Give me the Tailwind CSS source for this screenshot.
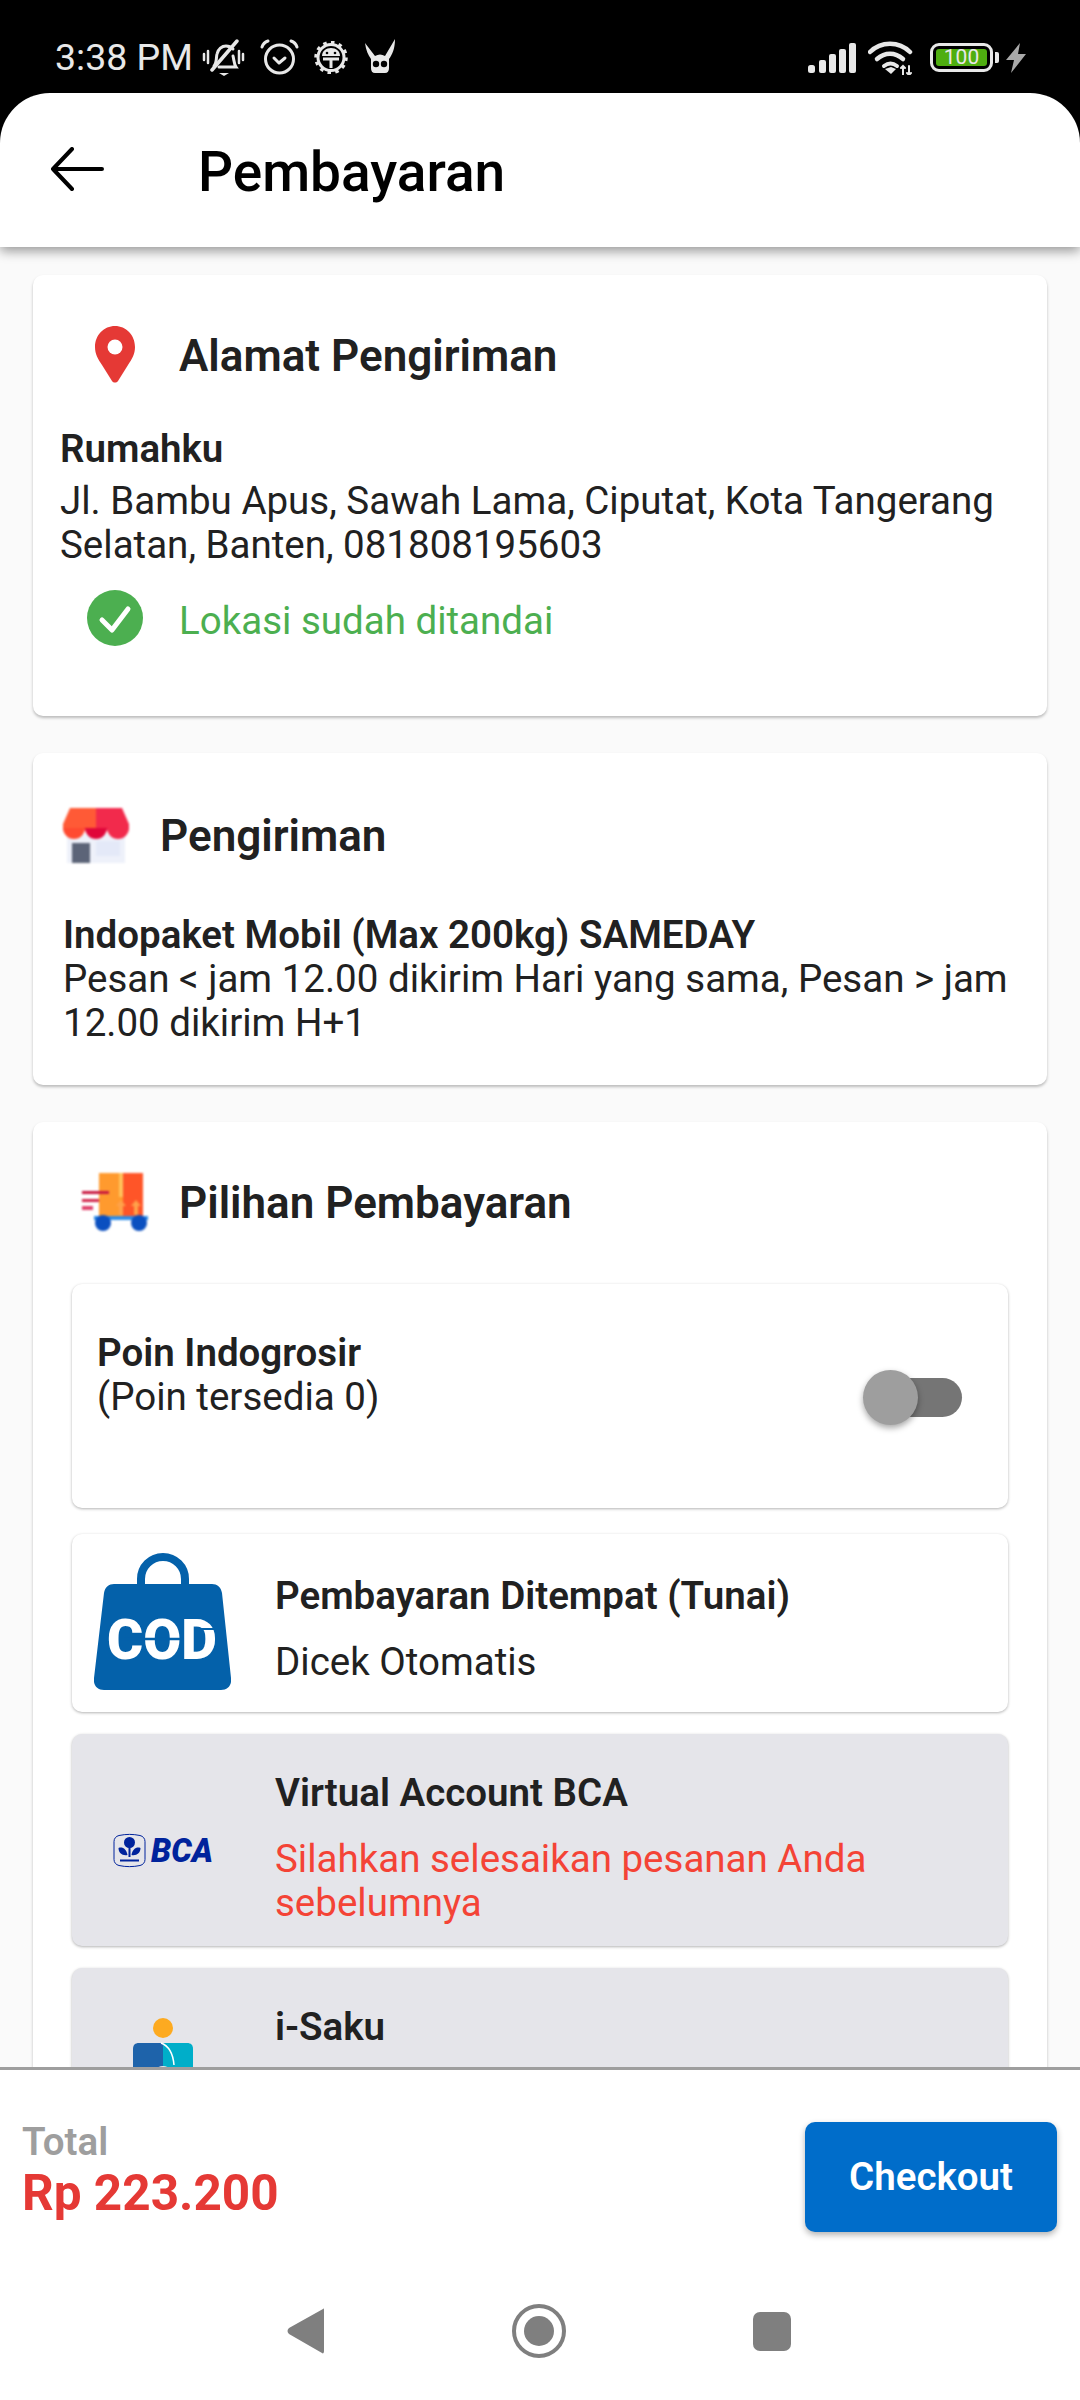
<!DOCTYPE html>
<html lang="en">
<head>
  <meta charset="UTF-8" />
  <meta name="viewport" content="width=device-width, initial-scale=1.0">
  <title>Pembayaran</title>
  <script src="https://cdn.jsdelivr.net/npm/@tailwindcss/browser@4"></script>
</head>
<body class="bg-black font-['Roboto',sans-serif] text-[#212121] text-[38.5px] leading-[44px]">
<div class="w-[1080px] h-[2400px] flex flex-col overflow-hidden bg-black">

  <!-- Status bar -->
  <div class="h-[93px] shrink-0 flex items-start pt-[38px] pl-[55px] text-[#e8e8e8]">
    <span class="text-[37.5px] leading-[38px] w-[147px] shrink-0">3:38 PM</span>
    <svg class="w-[43px] h-[38px] shrink-0 mt-[1px]" viewBox="0 0 43 38" fill="none" stroke="#e8e8e8" stroke-width="3" stroke-linecap="round">
      <path d="M2 15v6M6 12v12M37 12v12M41 15v6" stroke-width="2.5"/>
      <path d="M12 27c3-3 2-8 3-12 1-5 5-8 9-8 3 0 5 1 7 3M31 17c1 4 1 8 3 11H17"/>
      <path d="M10 31 35 2" stroke-width="3.5"/>
      <path d="M17 34h10l-5 3z" fill="#e8e8e8" stroke="none"/>
    </svg>
    <svg class="w-[39px] h-[36px] ml-[15px] shrink-0 mt-[1px]" viewBox="0 0 39 36" fill="none" stroke="#e8e8e8" stroke-width="3" stroke-linecap="round" stroke-linejoin="round">
      <circle cx="19.5" cy="20" r="14"/>
      <path d="M14 19l5 5 6-5"/>
      <path d="M2 8c1-3 3-5 6-6M37 8c-1-3-3-5-6-6"/>
    </svg>
    <svg class="w-[34px] h-[33px] ml-[15px] shrink-0 mt-[3px]" viewBox="0 0 34 33" fill="none">
      <circle cx="17" cy="16.5" r="13" stroke="#e8e8e8" stroke-width="3"/>
      <circle cx="17" cy="16.5" r="15" stroke="#e8e8e8" stroke-width="3.5" stroke-dasharray="3.5 4.3"/>
      <path d="M8 15c0-5 4-8 9-8s9 3 9 8z" fill="#e8e8e8"/>
      <path d="M9 18h16M17 18v9" stroke="#e8e8e8" stroke-width="3"/>
      <circle cx="13" cy="12" r="1.3" fill="#000"/><circle cx="21" cy="12" r="1.3" fill="#000"/>
    </svg>
    <svg class="w-[30px] h-[34px] ml-[17px] shrink-0 mt-[1px]" viewBox="0 0 30 34" fill="#e8e8e8">
      <path d="M0 4 10 17Q15 14 20 17L30 0C30 10 27 16 24 20V29Q24 34 20 34H10Q6 34 6 29V20C3 16 1 11 0 4z"/>
      <circle cx="11" cy="25" r="3.2" fill="#000"/><circle cx="19" cy="25" r="3.2" fill="#000"/>
    </svg>
    <svg class="w-[48px] h-[30px] ml-[413px] shrink-0 mt-[5px]" viewBox="0 0 48 30" fill="#e8e8e8">
      <rect x="0" y="22" width="7" height="8" rx="2.5"/><rect x="11" y="17" width="7" height="13" rx="2"/><rect x="21" y="11" width="7" height="19" rx="2"/><rect x="31" y="6" width="7" height="24" rx="2"/><rect x="41" y="0" width="7" height="30" rx="2"/>
    </svg>
    <svg class="w-[47px] h-[34px] ml-[12px] shrink-0 mt-[3px]" viewBox="0 0 47 34" fill="none" stroke="#e8e8e8" stroke-linecap="round">
      <path d="M2 11C13 0 31 0 42 11" stroke-width="4.5"/>
      <path d="M9 18c8-7 18-7 26 0" stroke-width="4.5"/>
      <path d="M16 25c4-3 9-3 13 0" stroke-width="4"/>
      <path d="M17 28l6-2 5 2-5 5z" fill="#e8e8e8" stroke="none"/>
      <path d="M35 25v9M41 34v-9M33 27l2-2 2 2M39 32l2 2 2-2" stroke-width="2"/>
    </svg>
    <div class="relative w-[63px] h-[29px] ml-[15px] mt-[5px] shrink-0 border-[3px] border-[#e8e8e8] rounded-[9px] p-[3px]">
      <div class="h-full w-full bg-[#4fae10] rounded-[3px] flex items-center justify-center text-[21px] leading-[17px] text-[#e8e8e8]">100</div>
      <div class="absolute left-[62px] top-[6px] w-[4px] h-[11px] bg-[#e8e8e8] rounded-r-[2px]"></div>
    </div>
    <svg class="w-[20px] h-[30px] ml-[13px] shrink-0 mt-[5px]" viewBox="0 0 20 30" fill="#a9a9a9"><path d="M14 0 0 17h8L5 30l15-19h-8z"/></svg>
  </div>

  <!-- App bar -->
  <header class="relative z-10 h-[154px] shrink-0 bg-white rounded-t-[50px] flex items-center shadow-[0_4px_12px_rgba(0,0,0,0.4)]">
    <svg class="w-[54px] h-[44px] ml-[50px] -mt-[2px] shrink-0" viewBox="0 0 54 44" fill="none" stroke="#000" stroke-width="4" stroke-linecap="round" stroke-linejoin="round">
      <path d="M52 22H3M22 2 3 22l19 20"/>
    </svg>
    <h1 class="ml-[94px] mt-[4px] text-[55px] leading-[64px] font-medium text-black">Pembayaran</h1>
  </header>

  <!-- Scroll content -->
  <main class="h-[1820px] shrink-0 overflow-hidden bg-[#fafafa] px-[33px] pt-[28px] flex flex-col gap-[37px]">

    <section class="h-[441px] shrink-0 bg-white rounded-[10px] shadow-[0_2px_3px_rgba(0,0,0,0.25)] pt-[51px]">
      <div class="h-[57px] flex items-center pl-[62px]">
        <svg class="w-[40px] h-[57px] shrink-0" viewBox="0 0 40 57">
          <path d="M20 0C9 0 0 9 0 21c0 7 3 12 7 18l10 16c1.500 2 4.500 2 6 0l10-16c4-6 7-11 7-18C40 9 31 0 20 0z" fill="#e53935"/>
          <circle cx="20" cy="21" r="7.500" fill="#fff"/>
        </svg>
        <h2 class="ml-[44px] mt-[3px] text-[44px] leading-[52px] font-semibold">Alamat Pengiriman</h2>
      </div>
      <div class="pl-[27px] mt-[44px] pr-[30px]">
        <p class="font-semibold">Rumahku</p>
        <p class="mt-[8px]">Jl. Bambu Apus, Sawah Lama, Ciputat, Kota Tangerang Selatan, Banten, 081808195603</p>
      </div>
      <div class="flex items-center pl-[54px] mt-[23px] h-[56px]">
        <svg class="w-[56px] h-[56px] shrink-0" viewBox="0 0 56 56">
          <circle cx="28" cy="28" r="28" fill="#4caf50"/>
          <path d="M15 30l10 10 16-21" fill="none" stroke="#fff" stroke-width="5" stroke-linecap="round" stroke-linejoin="round"/>
        </svg>
        <span class="ml-[36px] mt-[5px] text-[#4caf50]">Lokasi sudah ditandai</span>
      </div>
    </section>

    <section class="h-[332px] shrink-0 bg-white rounded-[10px] shadow-[0_2px_3px_rgba(0,0,0,0.25)] pt-[55px]">
      <div class="h-[55px] flex items-center pl-[30px]">
        <svg class="w-[66px] h-[55px] shrink-0 blur-[1px]" viewBox="0 0 66 55">
          <rect x="4" y="26" width="58" height="29" fill="#eef1fa"/>
          <rect x="9" y="35" width="18" height="20" fill="#5c6478"/>
          <rect x="33" y="33" width="24" height="15" fill="#e4e9f8"/>
          <path d="M7 0h26v22H0v-6z" fill="#ff5a36"/>
          <path d="M33 0h26l7 16v6H33z" fill="#f22a4c"/>
          <path d="M0 20a11 11 0 0 0 22 0z" fill="#ff4a30"/>
          <path d="M22 20a11 11 0 0 0 22 0z" fill="#e0063a"/>
          <path d="M44 20a11 11 0 0 0 22 0z" fill="#f22a4c"/>
        </svg>
        <h2 class="ml-[31px] text-[44px] leading-[52px] font-semibold">Pengiriman</h2>
      </div>
      <div class="pl-[30px] pr-[30px] mt-[50px]">
        <p class="font-semibold">Indopaket Mobil (Max 200kg) SAMEDAY</p>
        <p>Pesan &lt; jam 12.00 dikirim Hari yang sama, Pesan &gt; jam 12.00 dikirim H+1</p>
      </div>
    </section>

    <section class="shrink-0 bg-white rounded-[10px] shadow-[0_2px_3px_rgba(0,0,0,0.25)] pt-[51px] pb-[40px]">
      <div class="h-[59px] flex items-center pl-[49px]">
        <svg class="w-[66px] h-[59px] shrink-0 blur-[0.8px]" viewBox="0 0 66 59">
          <rect x="17" y="0" width="24" height="44" fill="#ff9a2e"/>
          <rect x="41" y="0" width="20" height="44" fill="#ff5528"/>
          <rect x="37" y="0" width="4" height="24" fill="#ffc35c"/>
          <path d="M37 42V33h-3l5-6 5 6h-3v9zM52 42V33h-3l5-6 5 6h-3v9z" fill="#ffa24a"/>
          <rect x="0" y="18" width="27" height="3" fill="#c8173f"/>
          <rect x="0" y="26" width="17" height="3" fill="#d2244a"/>
          <rect x="0" y="33" width="11" height="4" fill="#e0406a"/>
          <rect x="12" y="43" width="54" height="4" fill="#2f8de8"/>
          <circle cx="21" cy="50" r="8" fill="#0a4fc0"/>
          <circle cx="57" cy="50" r="8" fill="#0a4fc0"/>
        </svg>
        <h2 class="ml-[31px] text-[44px] leading-[52px] font-semibold">Pilihan Pembayaran</h2>
      </div>

      <div class="mx-[39px] mt-[52px] flex flex-col">
        <div class="relative h-[224px] rounded-[10px] bg-white shadow-[0_1px_3px_rgba(0,0,0,0.3)] pt-[47px] pl-[25px]">
          <p class="font-semibold">Poin Indogrosir</p>
          <p>(Poin tersedia 0)</p>
          <div class="absolute left-[799px] top-[94px] w-[91px] h-[39px] rounded-full bg-[#757575]"></div>
          <div class="absolute left-[791px] top-[86px] w-[55px] h-[55px] rounded-full bg-[#9e9e9e] shadow-[0_3px_6px_rgba(0,0,0,0.35)]"></div>
        </div>

        <div class="h-[178px] mt-[26px] rounded-[10px] bg-white shadow-[0_1px_3px_rgba(0,0,0,0.3)] flex">
          <div class="w-[203px] shrink-0 pl-[22px] pt-[19px]">
            <svg class="w-[137px] h-[137px]" viewBox="0 0 137 137">
              <path d="M47 33V26a22 22 0 0 1 44 0v7" fill="none" stroke="#0461aa" stroke-width="8"/>
              <path d="M20 31h98c5 0 9 3 10 9l9 85c1 7-3 12-10 12H10c-7 0-11-5-10-12l10-85c1-6 5-9 10-9z" fill="#0461aa"/>
              <text x="68" y="106" text-anchor="middle" textLength="110" lengthAdjust="spacingAndGlyphs" font-family="Roboto" font-weight="900" font-size="55" fill="#fff">COD</text>
              <path d="M30 86h30M56 86h34" stroke="#0461aa" stroke-width="2.500"/>
              <path d="M100 76h24" stroke="#0461aa" stroke-width="2"/>
            </svg>
          </div>
          <div class="pt-[40px]">
            <p class="font-semibold">Pembayaran Ditempat (Tunai)</p>
            <p class="mt-[22px]">Dicek Otomatis</p>
          </div>
        </div>

        <div class="h-[212px] mt-[22px] rounded-[10px] bg-[#e5e5ea] shadow-[0_1px_3px_rgba(0,0,0,0.3)] flex">
          <div class="w-[203px] shrink-0 pl-[41px] pt-[94px]">
            <svg class="w-[108px] h-[46px]" viewBox="0 0 108 46">
              <g transform="translate(0 6)">
                <path d="M6 1.500c7-1.500 14-1.500 21 0 3 .7 5 3 5 6v18c0 3-2 5.300-5 6-7 1.500-14 1.500-21 0-3-.7-5-3-5-6v-18c0-3 2-5.300 5-6z" fill="none" stroke="#00239c" stroke-width="1"/>
                <circle cx="16.500" cy="8.500" r="5.500" fill="#00239c"/>
                <path d="M15.500 13v10h2V13zM5.500 14c4-1.500 8 1 9 7-5 1-9-2-9-7zM27.500 14c-4-1.500-8 1-9 7 5 1 9-2 9-7z" fill="#00239c"/>
                <path d="M7 26.500h19" stroke="#00239c" stroke-width="2"/>
                <text x="38" y="28" textLength="62" lengthAdjust="spacingAndGlyphs" font-family="Roboto" font-weight="900" font-style="italic" font-size="33" fill="#00239c">BCA</text>
              </g>
            </svg>
          </div>
          <div class="pt-[37px] pr-[20px]">
            <p class="font-semibold">Virtual Account BCA</p>
            <p class="mt-[22px] text-[#f44336]">Silahkan selesaikan pesanan Anda sebelumnya</p>
          </div>
        </div>

        <div class="h-[212px] mt-[22px] rounded-[10px] bg-[#e5e5ea] shadow-[0_1px_3px_rgba(0,0,0,0.3)] flex">
          <div class="w-[203px] shrink-0 pl-[61px] pt-[50px]">
            <svg class="w-[60px] h-[90px]" viewBox="0 0 60 90">
              <circle cx="30" cy="10" r="10" fill="#fdaa20"/>
              <path d="M6 25h24v65H0V31c0-4 2-6 6-6z" fill="#1e63aa"/>
              <path d="M30 25h24c4 0 6 2 6 6v59H30z" fill="#00aec9"/>
              <path d="M20 90V58a10 10 0 0 1 20 0v32z" fill="#e5e5ea"/>
              <path d="M28 25c8 3 12 10 13 22" fill="none" stroke="#fff" stroke-width="1.500"/>
            </svg>
          </div>
          <div class="pt-[37px]">
            <p class="font-semibold">i-Saku</p>
          </div>
        </div>
      </div>
    </section>
  </main>

  <!-- Footer -->
  <footer class="relative z-10 flex-1 bg-white border-t-[3px] border-[#9e9e9e]">
    <div class="flex justify-between items-start pl-[22px] pr-[23px] pt-[52px] h-[234px]">
      <div class="-mt-[2px]">
        <p class="font-semibold text-[#9e9e9e]">Total</p>
        <p class="text-[49.5px] leading-[58px] font-bold text-[#e53935]">Rp 223.200</p>
      </div>
      <button class="w-[252px] h-[110px] rounded-[10px] bg-[#006dca] text-white font-semibold shadow-[0_3px_6px_rgba(0,0,0,0.3)]">Checkout</button>
    </div>
    <nav class="flex items-center pl-[287px] h-[54px]">
      <svg class="w-[37px] h-[46px] shrink-0" viewBox="0 0 37 46" fill="#7f7f7f"><path d="M36 1c1-1 1 0 1 2v40c0 2-1 3-2 2L2 26c-2-2-2-4 0-6z"/></svg>
      <svg class="w-[54px] h-[54px] ml-[188px] shrink-0" viewBox="0 0 54 54">
        <circle cx="27" cy="27" r="25" fill="none" stroke="#7f7f7f" stroke-width="4"/>
        <circle cx="27" cy="27" r="15" fill="#7f7f7f"/>
      </svg>
      <div class="w-[38px] h-[39px] ml-[187px] shrink-0 rounded-[7px] bg-[#7f7f7f]"></div>
    </nav>
  </footer>
</div>
</body>
</html>
